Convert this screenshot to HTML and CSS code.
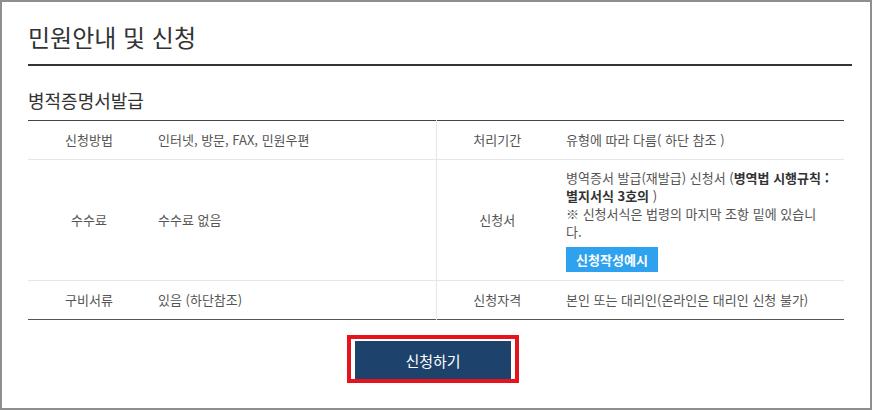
FILE: index.html
```html
<!DOCTYPE html>
<html lang="ko">
<head>
  <meta charset="UTF-8" />
  <meta name="viewport" content="width=device-width, initial-scale=1.0"/>
  <title>민원안내 및 신청</title>
  <link rel="stylesheet" href="styles.css">
</head>
<body>
  <div class="frame">
    <h2 class="page-title">민원안내 및 신청</h2>
    <h3 class="sub-title">병적증명서발급</h3>
    <table class="info-table">
      <colgroup>
        <col class="col-label" />
        <col class="col-value" />
        <col class="col-label" />
        <col class="col-value" />
      </colgroup>
      <tbody>
        <tr>
          <th>신청방법</th>
          <td>인터넷, 방문, FAX, 민원우편</td>
          <th class="split">처리기간</th>
          <td>유형에 따라 다름( 하단 참조 )</td>
        </tr>
        <tr>
          <th>수수료</th>
          <td>수수료 없음</td>
          <th class="split">신청서</th>
          <td class="form-cell">
            병역증서 발급(재발급) 신청서 (<b>병역법 시행규칙 :</b><br>
            <b>별지서식 3호의</b> )<br>
            ※ 신청서식은 법령의 마지막 조항 밑에 있습니<br>다.<br>
            <a class="sample-btn" href="#">신청작성예시</a>
          </td>
        </tr>
        <tr>
          <th>구비서류</th>
          <td>있음 (하단참조)</td>
          <th class="split">신청자격</th>
          <td>본인 또는 대리인(온라인은 대리인 신청 불가)</td>
        </tr>
      </tbody>
    </table>
    <div class="actions">
      <span class="highlight">
        <button class="apply-btn">신청하기</button>
      </span>
    </div>
  </div>
</body>
</html>
```

FILE: styles.css
```css
body {
  margin: 0;
  font-family: "Noto Sans CJK KR", "Noto Sans", sans-serif;
  background-color: #ffffff;
  color: #555;
}
.frame {
  width: 872px;
  height: 410px;
  box-sizing: border-box;
  border: 2px solid #8e8e8e;
  padding: 0 18px 0 26px;
}
.page-title {
  margin: 0;
  padding: 20px 0 12px;
  font-size: 24px;
  line-height: 30px;
  font-weight: normal;
  color: #333;
  border-bottom: 2px solid #333;
}
.sub-title {
  margin: 22px 0 8px;
  font-size: 18px;
  line-height: 24px;
  font-weight: normal;
  color: #333;
}
.info-table {
  width: 815px;
  border-collapse: collapse;
  table-layout: fixed;
  border-top: 1px solid #444;
  border-bottom: 1px solid #555;
  font-size: 13px;
  line-height: 18px;
}
.col-label {
  width: 122px;
}
.col-value {
  width: 286px;
}
.info-table tr + tr {
  border-top: 1px solid #e6e6e6;
}
.info-table th,
.info-table td {
  padding: 10px 8px 10px;
  font-weight: normal;
  color: #555;
  vertical-align: middle;
}
.info-table th {
  text-align: center;
}
.info-table td {
  text-align: left;
}
.info-table .split {
  border-left: 1px solid #e6e6e6;
}
.info-table .form-cell {
  padding: 9px 8px 8px;
}
.form-cell b {
  color: #333;
}
.sample-btn {
  display: inline-block;
  width: 92px;
  height: 25px;
  margin-top: 6px;
  line-height: 25px;
  text-align: center;
  background-color: #2ea2ee;
  color: #fff;
  font-weight: bold;
  text-decoration: none;
}
.actions {
  width: 815px;
  box-sizing: border-box;
  padding-right: 5px;
  margin-top: 15px;
  text-align: center;
}
.highlight {
  display: inline-block;
  border: 4px solid #e5131c;
  padding: 2px 4px 0;
  line-height: 0;
}
.apply-btn {
  width: 156px;
  height: 38px;
  border: none;
  background-color: #1d426b;
  color: #fff;
  font-family: inherit;
  font-size: 15px;
  cursor: pointer;
}
```
